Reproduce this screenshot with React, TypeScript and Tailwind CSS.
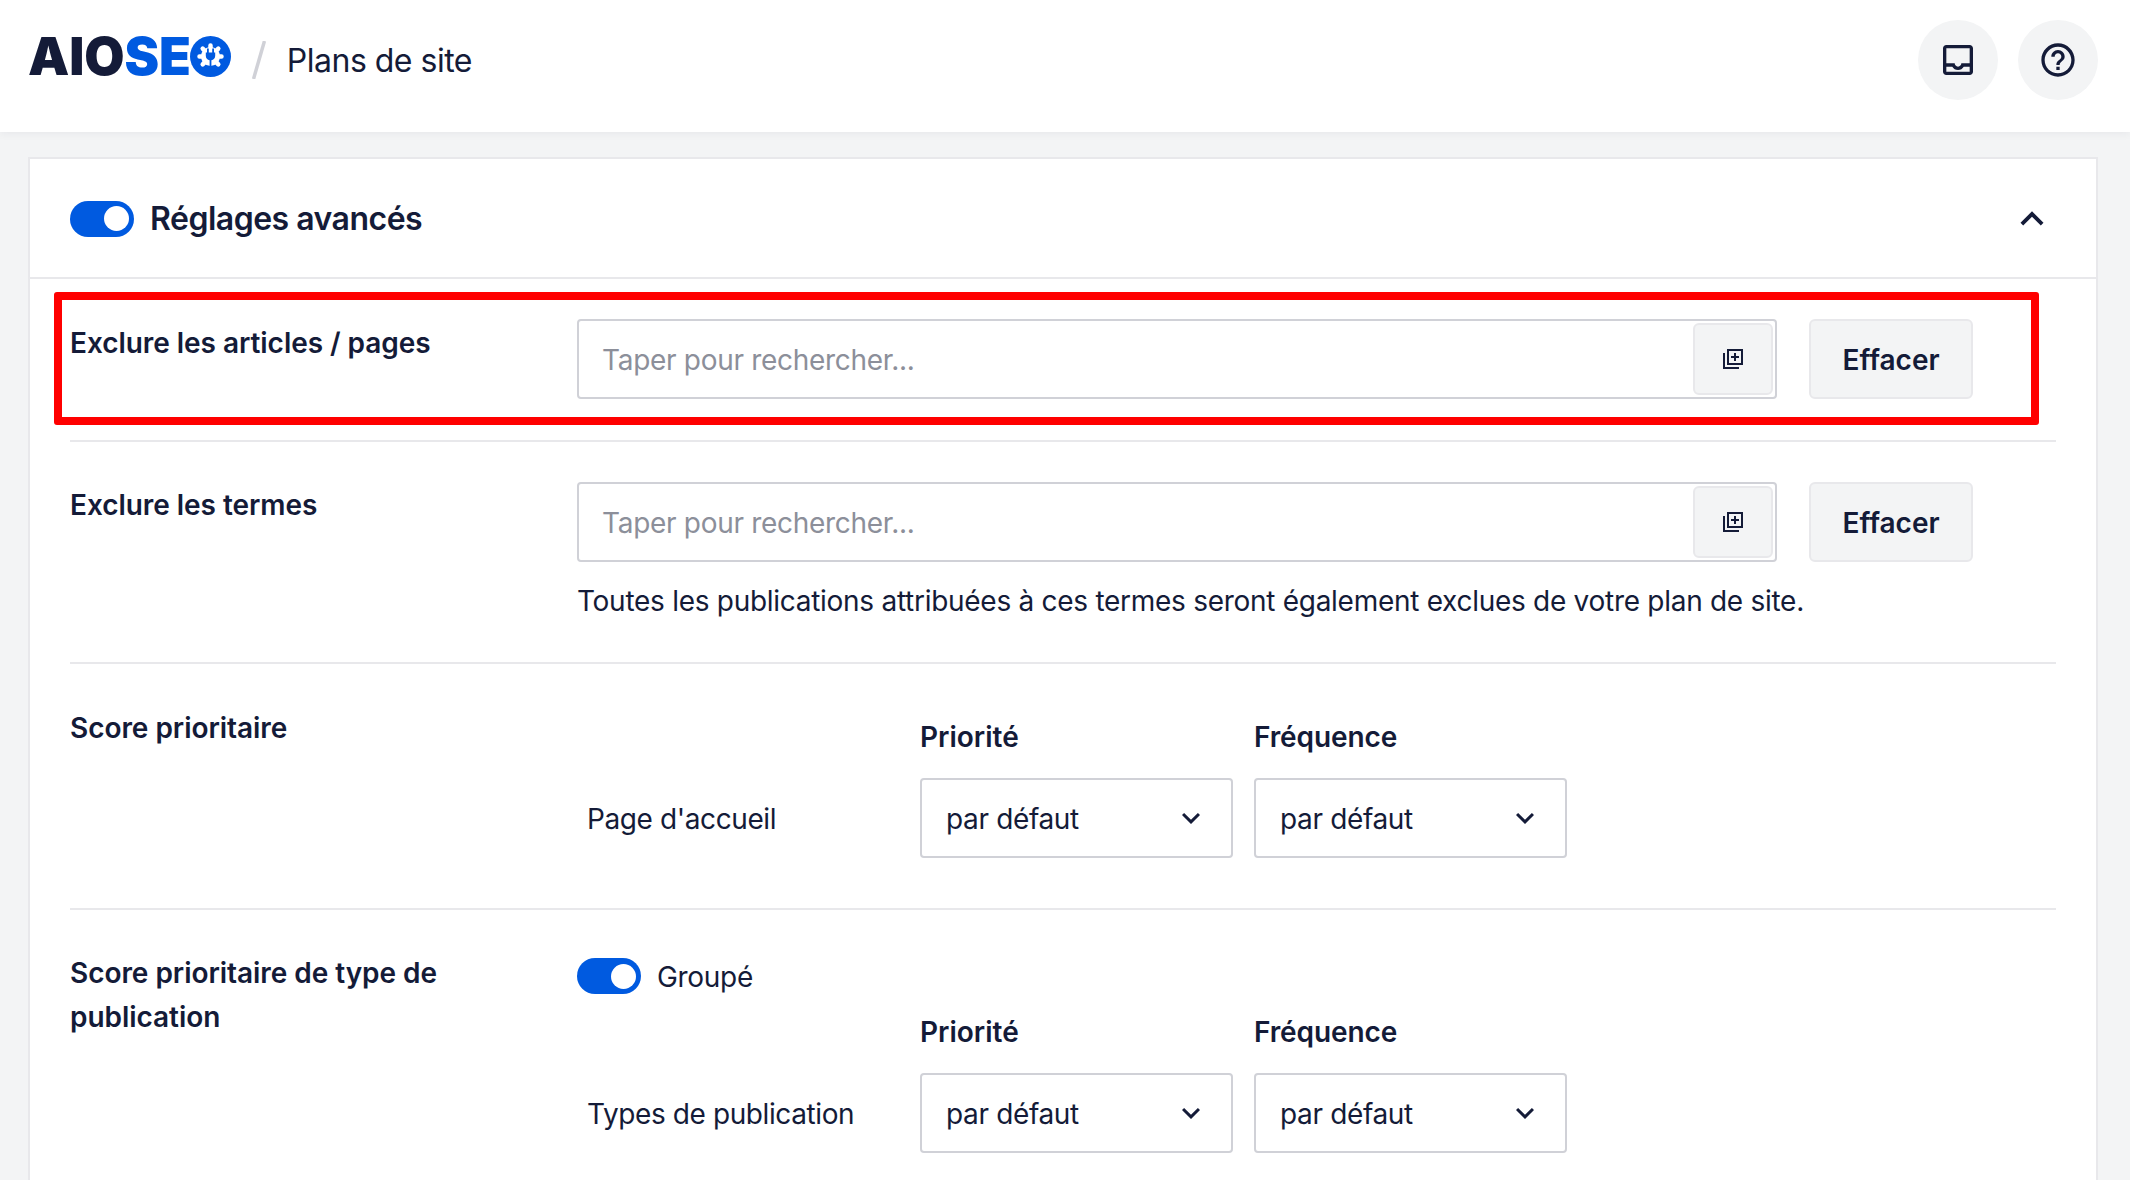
import React from 'react';

const Toggle = () => (
  <div className="flex h-9 w-16 shrink-0 items-center justify-end rounded-full bg-[#005ae0] pr-[5px]">
    <div className="h-[25px] w-[25px] rounded-full bg-white" />
  </div>
);

const LogoMark = () => (
  <svg width="41" height="41" viewBox="0 0 41 41" className="-ml-[1px] shrink-0">
    <circle cx="20.5" cy="20.5" r="20.5" fill="#005ae0" />
    <g stroke="#fff" strokeWidth="4.5" strokeLinecap="round">
      <path d="M20.5 9.5v3M12.7 12.7l2.1 2.1M28.3 12.7l-2.1 2.1M9.5 20.5h3M28.5 20.5h3M12.7 28.3l2.1-2.1M28.3 28.3l-2.1-2.1" />
    </g>
    <circle cx="20.5" cy="20.5" r="9.5" fill="#fff" />
    <path d="M17 12.5h1.8v4h3.4v-4H24v4h1.2v3.2c0 2.4-1.6 4.2-3.8 4.6V32h-1.8v-7.7c-2.2-.4-3.8-2.2-3.8-4.6v-3.2H17z" fill="#005ae0" />
  </svg>
);

const SearchField = () => (
  <div className="flex h-[80px] items-center gap-[32px]">
    <div className="flex h-full w-[1200px] items-center rounded-[4px] border-2 border-[#d0d1d7] bg-white pl-[23px] pr-[2px]">
      <input
        type="text"
        placeholder="Taper pour rechercher..."
        className="min-w-0 flex-1 pt-[2px] text-[28px] tracking-[-0.3px] text-[#141b38] outline-none placeholder:text-[#8c8f9a]"
      />
      <div className="flex h-[72px] w-[80px] items-center justify-center rounded-[6px] border-2 border-[#e8e8eb] bg-[#f3f4f5]">
        <svg width="24" height="24" viewBox="0 0 24 24" fill="#141b38">
          <path d="M4 6H2v16h16v-2H4V6zM6 2v16h16V2H6zm14 14H8V4h12v12zm-7-2h2v-3h3V9h-3V6h-2v3h-3v2h3z" />
        </svg>
      </div>
    </div>
    <button className="flex h-full w-[164px] items-center justify-center rounded-[6px] border-2 border-[#e8e8eb] bg-[#f3f4f5] pt-[2px] text-[28px] font-semibold text-[#141b38]">
      Effacer
    </button>
  </div>
);

const Select = () => (
  <div className="flex h-[80px] items-center justify-between rounded-[4px] border-2 border-[#d0d1d7] bg-white pl-[24px] pr-[22px]">
    <span className="pt-[2px] text-[28px] tracking-[-0.35px]">par défaut</span>
    <svg width="36" height="36" viewBox="0 0 24 24" fill="#141b38">
      <path d="M16.59 8.59L12 13.17 7.41 8.59 6 10l6 6 6-6z" />
    </svg>
  </div>
);

const PriorityGrid = ({ label }: { label: string }) => (
  <div className="grid grid-cols-[322px_313px_313px] items-center gap-x-[21px] gap-y-[19px]">
    <div />
    <div className="text-[28px] leading-[44px] font-semibold">Priorité</div>
    <div className="text-[28px] leading-[44px] font-semibold tracking-[-0.1px]">Fréquence</div>
    <div className="pt-[2px] pl-[10px] text-[28px] tracking-[-0.4px]">{label}</div>
    <Select />
    <Select />
  </div>
);

const Row = ({ label, last, children, className }: { label: React.ReactNode; last?: boolean; children: React.ReactNode; className: string }) => (
  <div className={`flex ${last ? '' : 'border-b-2 border-[#e8e8eb]'} ${className}`}>
    <div className="w-[507px] shrink-0 pt-[2px] pr-[60px] text-[28px] leading-[44px] font-semibold tracking-[-0.05px]">{label}</div>
    <div className="flex-1">{children}</div>
  </div>
);

export default function App() {
  return (
    <div className="h-[1180px] overflow-hidden bg-[#f3f4f5] font-[Inter,sans-serif] text-[#141b38]">
      {/* Top bar */}
      <header className="flex h-[132px] items-center justify-between bg-white pr-[32px] pb-[12px] pl-[28px] shadow-[0_2px_8px_rgba(20,27,56,0.05)]">
        <div className="flex items-center">
          <div className="-mt-[8px] flex items-center">
            <span className="text-[52px] leading-[41px] font-black tracking-[-0.1px]">
              AIO<span className="text-[#005ae0]">SE</span>
            </span>
            <LogoMark />
          </div>
          <svg width="14" height="38" viewBox="0 0 14 38" className="ml-[21px]">
            <path d="M12.5 0L1.5 38" stroke="#d0d1d7" strokeWidth="3.5" />
          </svg>
          <span className="ml-[21px] pt-[2px] text-[32px] tracking-[-0.5px]">Plans de site</span>
        </div>
        <div className="flex gap-[20px]">
          <div className="flex h-20 w-20 items-center justify-center rounded-full bg-[#f3f4f5]">
            <svg width="40" height="40" viewBox="0 0 24 24" fill="#141b38">
              <path d="M19 3H5c-1.1 0-2 .9-2 2v14c0 1.1.9 2 2 2h14c1.1 0 2-.9 2-2V5c0-1.1-.9-2-2-2zm0 16H5v-3h3.56c.69 1.19 1.97 2 3.45 2s2.75-.81 3.44-2H19v3zm0-5h-4.99c0 1.1-.9 2-2 2s-2-.9-2-2H5V5h14v9z" />
            </svg>
          </div>
          <div className="flex h-20 w-20 items-center justify-center rounded-full bg-[#f3f4f5]">
            <svg width="40" height="40" viewBox="0 0 24 24" fill="#141b38">
              <path d="M11 18h2v-2h-2v2zm1-16C6.48 2 2 6.48 2 12s4.48 10 10 10 10-4.48 10-10S17.52 2 12 2zm0 18c-4.41 0-8-3.59-8-8s3.59-8 8-8 8 3.59 8 8-3.59 8-8 8zm0-14c-2.21 0-4 1.79-4 4h2c0-1.1.9-2 2-2s2 .9 2 2c0 2-3 1.75-3 5h2c0-2.25 3-2.5 3-5 0-2.21-1.79-4-4-4z" />
            </svg>
          </div>
        </div>
      </header>

      <main className="pt-[25px] pr-[32px] pl-[28px]">
        <div className="relative border-2 border-[#e8e8eb] bg-white">
          {/* Card title */}
          <div className="flex h-[120px] items-center justify-between border-b-2 border-[#e8e8eb] pt-[1px] pr-[41px] pl-[40px]">
            <div className="flex items-center gap-[16px]">
              <Toggle />
              <span className="text-[32px] font-semibold tracking-[-0.5px]">Réglages avancés</span>
            </div>
            <svg width="46" height="46" viewBox="0 0 24 24" fill="#141b38">
              <path d="M12 8l-6 6 1.41 1.41L12 10.83l4.59 4.58L18 14z" />
            </svg>
          </div>

          <div className="px-[40px]">
            <Row label="Exclure les articles / pages" className="pt-[40px] pb-[41px]">
              <SearchField />
            </Row>
            <Row label="Exclure les termes" className="pt-[39px] pb-[39px]">
              <div className="pt-[1px]">
                <SearchField />
              </div>
              <p className="mt-[17px] text-[28px] leading-[44px] tracking-[-0.28px]">
                Toutes les publications attribuées à ces termes seront également exclues de votre plan de site.
              </p>
            </Row>
            <Row label="Score prioritaire" className="pt-[40px] pb-[50px]">
              <div className="pt-[11px]">
                <PriorityGrid label="Page d'accueil" />
              </div>
            </Row>
            <Row label="Score prioritaire de type de publication" last className="pt-[39px] pb-[40px]">
              <div className="pt-[5px]">
                <div className="mb-[12px] flex items-center gap-[16px]">
                  <Toggle />
                  <span className="pt-[2px] text-[28px] tracking-[-0.3px]">Groupé</span>
                </div>
                <PriorityGrid label="Types de publication" />
              </div>
            </Row>
          </div>

          {/* Red annotation over the first row */}
          <div className="pointer-events-none absolute top-[133px] left-[24px] h-[133px] w-[1985px] rounded-[3px] border-[8px] border-[#ff0000]" />
        </div>
      </main>
    </div>
  );
}
